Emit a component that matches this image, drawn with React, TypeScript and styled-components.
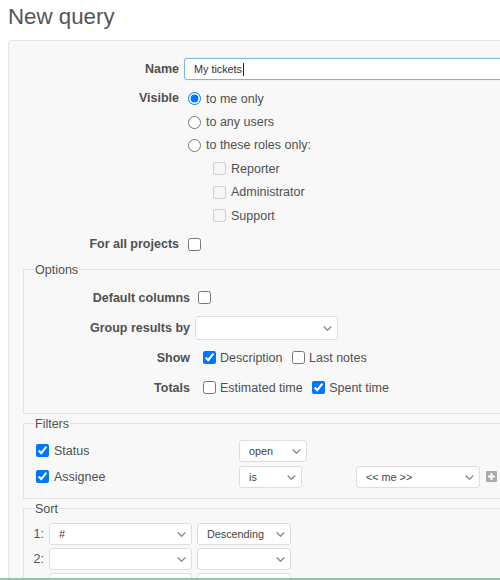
import React from 'react';
import styled, { createGlobalStyle } from 'styled-components';

const GlobalStyle = createGlobalStyle`
  html, body {
    margin: 0;
    background: #fff;
    overflow: hidden;
  }
  body {
    font-family: "Liberation Sans", Arial, sans-serif;
    font-size: 12.5px;
    color: #505050;
  }
`;

const Page = styled.div`
  width: 680px;
  padding: 0 0 0 8px;
`;

const Title = styled.h2`
  margin: 0;
  padding-top: 4px;
  height: 36px;
  font-size: 22.3px;
  font-weight: normal;
  line-height: 26px;
  color: #555;
`;

const Box = styled.div`
  background: #f8f8f8;
  border: 1px solid #e6e6e6;
  border-radius: 3px;
  padding: 17px 0 40px 14px;
`;

const Row = styled.div<{ $h?: number; $mt?: number }>`
  display: flex;
  align-items: center;
  height: ${p => (p.$h ? `${p.$h}px` : 'auto')};
  margin-top: ${p => p.$mt ?? 0}px;
`;

const TopRow = styled.div<{ $mt?: number }>`
  display: flex;
  align-items: flex-start;
  margin-top: ${p => p.$mt ?? 0}px;
`;

const Label = styled.label<{ $lh?: number }>`
  flex-shrink: 0;
  width: 156px;
  text-align: right;
  font-weight: bold;
  line-height: ${p => (p.$lh ? `${p.$lh}px` : 'normal')};
`;

const TextField = styled.div`
  display: flex;
  align-items: center;
  width: 420px;
  height: 22px;
  margin-left: 5px;
  box-sizing: border-box;
  padding-left: 9px;
  background: #fff;
  border: 1px solid #79b8e6;
  border-radius: 3px;
  box-shadow: 0 0 1px #9ccbee;
  font-size: 10.8px;
  color: #333;
`;

const Caret = styled.span`
  display: inline-block;
  width: 1px;
  height: 13px;
  margin-left: 1px;
  background: #222;
`;

const Choices = styled.div`
  display: flex;
  flex-direction: column;
`;

const Choice = styled.label<{ $indent: number }>`
  display: flex;
  align-items: center;
  height: 23.4px;
  padding-left: ${p => p.$indent}px;
  gap: 5px;
`;

const Radio = styled.input.attrs({ type: 'radio' })`
  margin: 0;
  width: 13px;
  height: 13px;
`;

const Check = styled.input.attrs({ type: 'checkbox' })<{ $ml?: number }>`
  margin: 0 0 0 ${p => p.$ml ?? 0}px;
  width: 13px;
  height: 13px;
  flex-shrink: 0;
`;

const Fieldset = styled.fieldset<{ $mt: number; $pt: number; $pb: number }>`
  margin: ${p => p.$mt}px 0 0 0;
  padding: ${p => p.$pt}px 10px ${p => p.$pb}px 10px;
  border: 1px solid #e2e2e2;
  min-width: 0;
`;

const Legend = styled.legend`
  padding: 0 1px;
  line-height: 16px;
  font-size: 12.5px;
  color: #505050;
`;

const Inline = styled.div<{ $ml: number }>`
  display: flex;
  align-items: center;
  margin-left: ${p => p.$ml}px;
`;

const CheckItem = styled.label`
  display: inline-flex;
  align-items: center;
  gap: 4px;
  margin-right: 9.5px;
`;

const SelectWrap = styled.div<{ $w: number; $h?: number; $ml?: number }>`
  position: relative;
  flex-shrink: 0;
  width: ${p => p.$w}px;
  height: ${p => p.$h ?? 22}px;
  margin-left: ${p => p.$ml ?? 0}px;
`;

const Select = styled.select`
  appearance: none;
  width: 100%;
  height: 100%;
  box-sizing: border-box;
  margin: 0;
  padding: 0 20px 0 9px;
  background: #fff;
  border: 1px solid #dedede;
  border-radius: 3px;
  font-family: "Liberation Sans", Arial, sans-serif;
  font-size: 10.8px;
  color: #444;
`;

const Chevron = styled.svg`
  position: absolute;
  right: 6px;
  top: 50%;
  margin-top: -2px;
  pointer-events: none;
`;

const FilterName = styled.label`
  display: flex;
  align-items: center;
  gap: 5px;
  width: 205px;
  flex-shrink: 0;
`;

const OperatorCell = styled.div`
  width: 117px;
  flex-shrink: 0;
`;

const AddButton = styled.span`
  display: inline-flex;
  align-items: center;
  justify-content: center;
  width: 11px;
  height: 11px;
  margin-left: 6px;
  background: #a9a9a9;
  border-radius: 1px;
`;

const SortIndex = styled.span`
  width: 11px;
  margin-left: -1px;
  margin-right: 5px;
  text-align: right;
`;

const BottomLine = styled.div`
  position: fixed;
  left: 0;
  right: 0;
  bottom: 0;
  height: 2px;
  background: #8fc9a1;
`;

const Dropdown: React.FC<{ w: number; h?: number; ml?: number; value?: string; options?: string[] }> = ({
  w,
  h,
  ml,
  value = '',
  options = [],
}) => (
  <SelectWrap $w={w} $h={h} $ml={ml}>
    <Select defaultValue={value}>
      <option value=""></option>
      {options.map(o => (
        <option key={o} value={o}>
          {o}
        </option>
      ))}
    </Select>
    <Chevron width="9" height="5" viewBox="0 0 9 5">
      <path d="M0.7 0.6 L4.5 4.2 L8.3 0.6" fill="none" stroke="#8a8a8a" strokeWidth="1.4" />
    </Chevron>
  </SelectWrap>
);

const PlusIcon = () => (
  <AddButton>
    <svg width="9" height="9" viewBox="0 0 9 9">
      <path d="M4.5 1 V8 M1 4.5 H8" stroke="#fff" strokeWidth="2" />
    </svg>
  </AddButton>
);

export default function App() {
  return (
    <Page>
      <GlobalStyle />
      <Title>New query</Title>
      <Box>
        <Row $h={22}>
          <Label>Name</Label>
          <TextField>
            My tickets
            <Caret />
          </TextField>
        </Row>

        <TopRow $mt={7}>
          <Label $lh={23.4}>Visible</Label>
          <Choices>
            <Choice $indent={9}>
              <Radio name="visibility" defaultChecked />
              to me only
            </Choice>
            <Choice $indent={9}>
              <Radio name="visibility" />
              to any users
            </Choice>
            <Choice $indent={9}>
              <Radio name="visibility" />
              to these roles only:
            </Choice>
            {['Reporter', 'Administrator', 'Support'].map(role => (
              <Choice key={role} $indent={34}>
                <Check disabled />
                {role}
              </Choice>
            ))}
          </Choices>
        </TopRow>

        <Row $h={23.4} $mt={5}>
          <Label>For all projects</Label>
          <Check $ml={9} />
        </Row>

        <Fieldset $mt={6} $pt={5} $pb={10}>
          <Legend>Options</Legend>
          <Row $h={30}>
            <Label>Default columns</Label>
            <Check $ml={8} />
          </Row>
          <Row $h={30}>
            <Label>Group results by</Label>
            <Dropdown w={143} h={24} ml={5} options={['Status', 'Assignee', 'Tracker']} />
          </Row>
          <Row $h={30}>
            <Label>Show</Label>
            <Inline $ml={13}>
              <CheckItem>
                <Check defaultChecked />
                Description
              </CheckItem>
              <CheckItem>
                <Check />
                Last notes
              </CheckItem>
            </Inline>
          </Row>
          <Row $h={30}>
            <Label>Totals</Label>
            <Inline $ml={13}>
              <CheckItem>
                <Check />
                Estimated time
              </CheckItem>
              <CheckItem>
                <Check defaultChecked />
                Spent time
              </CheckItem>
            </Inline>
          </Row>
        </Fieldset>

        <Fieldset $mt={2} $pt={6} $pb={8}>
          <Legend>Filters</Legend>
          <Row $h={26}>
            <FilterName>
              <Check $ml={2} defaultChecked />
              Status
            </FilterName>
            <Dropdown w={68} value="open" options={['open', 'is', 'closed', 'any']} />
          </Row>
          <Row $h={26}>
            <FilterName>
              <Check $ml={2} defaultChecked />
              Assignee
            </FilterName>
            <OperatorCell>
              <Dropdown w={63} value="is" options={['is', 'is not', 'none', 'any']} />
            </OperatorCell>
            <Dropdown w={124} value="<< me >>" options={['<< me >>']} />
            <PlusIcon />
          </Row>
        </Fieldset>

        <Fieldset $mt={2} $pt={5} $pb={8}>
          <Legend>Sort</Legend>
          {[1, 2, 3].map(n => (
            <Row $h={25} key={n}>
              <SortIndex>{n}:</SortIndex>
              <Dropdown w={143} value={n === 1 ? '#' : ''} options={['#', 'Status', 'Priority']} />
              <Dropdown w={94} ml={5} value={n === 1 ? 'Descending' : ''} options={['Ascending', 'Descending']} />
            </Row>
          ))}
        </Fieldset>
      </Box>
      <BottomLine />
    </Page>
  );
}
